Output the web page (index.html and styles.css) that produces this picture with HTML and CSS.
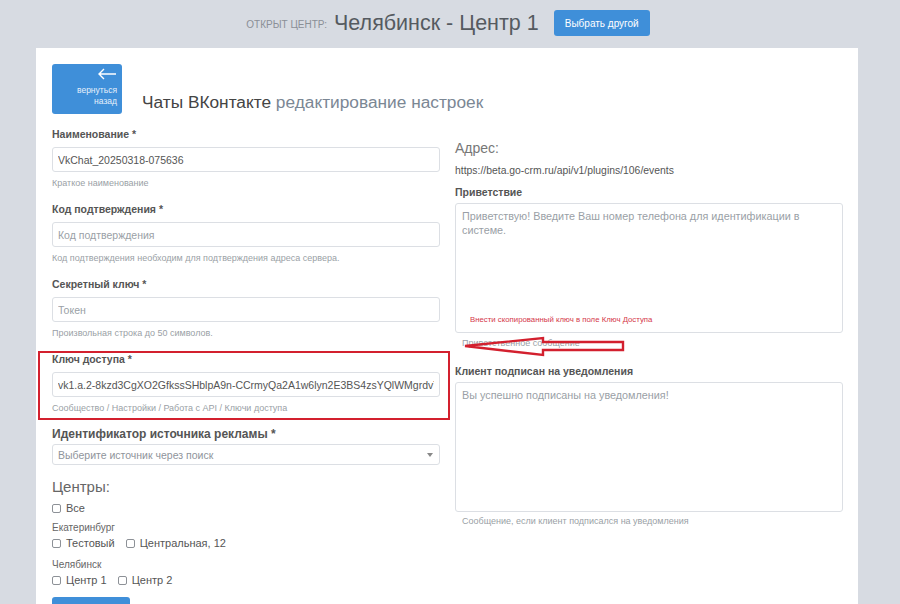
FILE: index.html
```html
<!DOCTYPE html>
<html lang="ru">
<head>
    <meta charset="UTF-8">
    <meta name="viewport" content="width=device-width, initial-scale=1.0">
    <link rel="stylesheet" href="styles.css">
    <title>Чаты ВКонтакте</title>
</head>
<body>

<div class="topbar">
    <span class="topbar-caption">открыт центр:</span>
    <span class="topbar-center">Челябинск - Центр 1</span>
    <button class="btn btn-small">Выбрать другой</button>
</div>

<div class="card">
    <div class="card-head">
        <a class="back-btn" href="#">
            <svg class="back-arrow" width="20" height="12" viewBox="0 0 20 12">
                <path d="M19 6H2M7 1L2 6l5 5" fill="none" stroke="#fff" stroke-width="1.4"/>
            </svg>
            <span>вернуться</span>
            <span>назад</span>
        </a>
        <h1 class="page-title">Чаты ВКонтакте <span>редактирование настроек</span></h1>
    </div>

    <div class="columns">
        <div class="col">
            <div class="field">
                <label class="label">Наименование *</label>
                <input class="input" type="text" value="VkChat_20250318-075636">
                <div class="help">Краткое наименование</div>
            </div>
            <div class="field">
                <label class="label">Код подтверждения *</label>
                <input class="input" type="text" placeholder="Код подтверждения">
                <div class="help">Код подтверждения необходим для подтверждения адреса сервера.</div>
            </div>
            <div class="field">
                <label class="label">Секретный ключ *</label>
                <input class="input" type="text" placeholder="Токен">
                <div class="help">Произвольная строка до 50 символов.</div>
            </div>
            <div class="field field-marked">
                <div class="mark-box"></div>
                <label class="label">Ключ доступа *</label>
                <input class="input" type="text" value="vk1.a.2-8kzd3CgXO2GfkssSHblpA9n-CCrmyQa2A1w6lyn2E3BS4zsYQlWMgrdvT5n">
                <div class="help">Сообщество / Настройки / Работа с API / Ключи доступа</div>
            </div>
            <div class="field">
                <label class="label label-big">Идентификатор источника рекламы *</label>
                <div class="select">
                    <span>Выберите источник через поиск</span>
                    <span class="caret"></span>
                </div>
            </div>

            <h3 class="centers-title">Центры:</h3>
            <div class="check-row first">
                <label class="check"><span class="box"></span>Все</label>
            </div>
            <div class="city">Екатеринбург</div>
            <div class="check-row">
                <label class="check"><span class="box"></span>Тестовый</label>
                <label class="check"><span class="box"></span>Центральная, 12</label>
            </div>
            <div class="city city-gap">Челябинск</div>
            <div class="check-row">
                <label class="check"><span class="box"></span>Центр 1</label>
                <label class="check"><span class="box"></span>Центр 2</label>
            </div>
            <button class="btn btn-save" aria-label="Сохранить"></button>
        </div>

        <div class="col col-right">
            <div class="addr-title">Адрес:</div>
            <div class="addr-url">https://beta.go-crm.ru/api/v1/plugins/106/events</div>

            <label class="label label-r">Приветствие</label>
            <div class="area-wrap">
                <textarea class="area" placeholder="Приветствую! Введите Ваш номер телефона для идентификации в системе."></textarea>
                <span class="note">Внести скопированный ключ в поле Ключ Доступа</span>
            </div>
            <div class="help help-r hint-wrap">
                Приветственное сообщение
                <svg class="hint-arrow" width="175" height="30" viewBox="0 0 175 30">
                    <path d="M10 13L88 5V9H168V17H88V22Z" fill="none" stroke="#d3202e" stroke-width="2.4" stroke-linejoin="miter"/>
                </svg>
            </div>

            <label class="label label-r label-gap">Клиент подписан на уведомления</label>
            <div class="area-wrap">
                <textarea class="area" placeholder="Вы успешно подписаны на уведомления!"></textarea>
            </div>
            <div class="help help-r help-tight">Сообщение, если клиент подписался на уведомления</div>
        </div>
    </div>
</div>

</body>
</html>
```

FILE: styles.css
```css
*{
    margin: 0;
    padding: 0;
    box-sizing: border-box;
}
html, body{
    height: 100%;
}
body{
    background-color: #d7dbe2;
    font-family: "Liberation Sans", Arial, sans-serif;
    color: #555;
    overflow: hidden;
}

.topbar{
    display: flex;
    justify-content: center;
    align-items: center;
    height: 36px;
    padding-top: 10px;
    padding-right: 4px;
    margin-bottom: 12px;
}
.topbar-caption{
    font-size: 10px;
    text-transform: uppercase;
    color: #8a8f96;
    margin-right: 7px;
    margin-top: 3px;
}
.topbar-center{
    font-size: 21.5px;
    color: #555a60;
    margin-right: 15px;
}

.btn{
    background-color: #3f8fd9;
    color: #fff;
    border: none;
    border-radius: 3px;
    font-family: inherit;
    cursor: pointer;
}
.btn-small{
    width: 96px;
    height: 26px;
    font-size: 10px;
}

.card{
    background-color: #fff;
    margin-left: 36px;
    width: 822px;
    height: 600px;
    padding: 16px 15px 0 16px;
}

.card-head{
    display: flex;
    align-items: flex-end;
    gap: 20px;
}
.back-btn{
    display: flex;
    flex-direction: column;
    align-items: flex-end;
    width: 70px;
    height: 50px;
    padding: 4px 5px 0 0;
    background-color: #3f8fd9;
    border-radius: 3px;
    color: #e6f0fb;
    text-decoration: none;
    font-size: 8.5px;
    line-height: 11px;
}
.back-arrow{
    margin-bottom: 5px;
}
.page-title{
    font-size: 17.3px;
    font-weight: normal;
    color: #444;
    margin-bottom: 1px;
}
.page-title span{
    color: #7b8794;
}

.columns{
    display: flex;
    gap: 15px;
    margin-top: 13px;
}
.col{
    width: 388px;
}
.col-right{
    padding-top: 13px;
}

.field{
    margin-bottom: 13px;
}
.field-marked{
    position: relative;
}
.mark-box{
    position: absolute;
    top: -1px;
    left: -14px;
    right: -10px;
    bottom: -6px;
    border: 2px solid #d3202e;
    pointer-events: none;
}
.label{
    display: block;
    font-size: 10.5px;
    line-height: 14px;
    font-weight: bold;
    color: #555;
    margin-bottom: 6px;
}
.label-big{
    font-size: 12px;
    margin-bottom: 3px;
}
.input{
    display: block;
    width: 100%;
    height: 25px;
    padding: 0 5px;
    border: 1px solid #dcdfe4;
    border-radius: 3px;
    font-family: inherit;
    font-size: 10.5px;
    color: #555;
    outline: none;
}
.input::placeholder,
.area::placeholder{
    color: #9a9fa6;
}
.help{
    font-size: 9px;
    line-height: 12px;
    color: #9a9fa6;
    margin-top: 5px;
}

.select{
    display: flex;
    justify-content: space-between;
    align-items: center;
    height: 21px;
    padding: 0 6px 0 5px;
    border: 1px solid #dcdfe4;
    border-radius: 3px;
    font-size: 10.5px;
    color: #8f949b;
}
.caret{
    width: 0;
    height: 0;
    border-left: 3px solid transparent;
    border-right: 3px solid transparent;
    border-top: 4px solid #888;
}

.centers-title{
    font-size: 15px;
    line-height: 18px;
    font-weight: normal;
    color: #666;
    margin-top: 13px;
}
.check-row{
    display: flex;
    gap: 11px;
}
.check-row.first{
    margin-top: 5px;
    margin-bottom: 6px;
}
.check{
    display: flex;
    align-items: center;
    gap: 5px;
    font-size: 11px;
    line-height: 14px;
    color: #555;
}
.box{
    width: 9px;
    height: 9px;
    border: 1px solid #8d9197;
    border-radius: 2px;
}
.city{
    font-size: 10px;
    line-height: 14px;
    color: #666;
    margin-bottom: 1px;
}
.city-gap{
    margin-top: 8px;
}
.btn-save{
    display: block;
    margin-top: 10px;
    width: 78px;
    height: 36px;
}

.addr-title{
    font-size: 14px;
    line-height: 17px;
    color: #777;
}
.addr-url{
    font-size: 10.4px;
    line-height: 13px;
    color: #555;
    margin-top: 7px;
    margin-bottom: 8px;
}
.label-r{
    margin-bottom: 4px;
}
.label-gap{
    margin-top: 15px;
}
.area-wrap{
    position: relative;
}
.area{
    display: block;
    width: 100%;
    height: 130px;
    padding: 5px 6px;
    border: 1px solid #dcdfe4;
    border-radius: 3px;
    font-family: inherit;
    font-size: 10.8px;
    line-height: 14px;
    color: #555;
    resize: none;
    outline: none;
}
.note{
    position: absolute;
    left: 15px;
    top: 112px;
    font-size: 7.8px;
    color: #d4384a;
}
.help-r{
    padding-left: 7px;
    margin-top: 4px;
}
.help-tight{
    margin-top: 3px;
}
.hint-wrap{
    position: relative;
}
.hint-arrow{
    position: absolute;
    left: 0;
    top: -4px;
}
```
